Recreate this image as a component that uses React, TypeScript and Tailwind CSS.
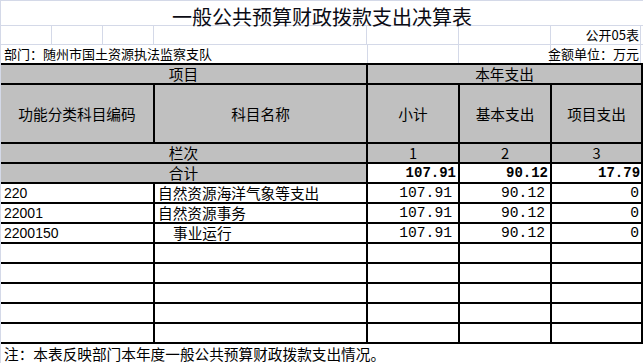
import React from 'react';

const cjk = "font-['Noto_Sans_CJK_SC','Noto_Sans',sans-serif]";
const mono = "font-['Liberation_Mono','DejaVu_Sans_Mono',monospace]";
const sans = "font-['Liberation_Sans',Arial,sans-serif]";

interface Row {
  code: string;
  name: string;
  total: string;
  basic: string;
  project: string;
  indent?: boolean;
}

const rows: Row[] = [
  { code: '220', name: '自然资源海洋气象等支出', total: '107.91', basic: '90.12', project: '0' },
  { code: '22001', name: '自然资源事务', total: '107.91', basic: '90.12', project: '0' },
  { code: '2200150', name: '事业运行', total: '107.91', basic: '90.12', project: '0', indent: true },
];

const emptyRows = 5;

const cell = 'border-2 border-black p-0 h-[20px] leading-[16px] text-[14.67px] text-black';
const head = `${cell} bg-[#c0c0c0] text-center font-normal ${cjk}`;

export default function App() {
  return (
    <div className="w-[643px] h-[363px] bg-white overflow-hidden border-l border-[#d4d9e8]">
      {/* sheet rows above the table */}
      <div className="h-[63px] flex flex-col">
        <div className="h-[26px] border-t border-b border-[#d4d9e8] relative">
          <div className={`absolute left-0 right-0 top-[1px] text-center text-[20px] leading-[29px] text-[#0b0b14] ${cjk}`}>
            一般公共预算财政拨款支出决算表
          </div>
        </div>
        <div className="h-[19px] flex border-b border-[#d4d9e8]">
          <div className="w-[51px] border-r border-[#d4d9e8]" />
          <div className="w-[51px] border-r border-[#d4d9e8]" />
          <div className="w-[51px] border-r border-[#d4d9e8]" />
          <div className="w-[213px] border-r border-[#d4d9e8]" />
          <div className="w-[92px] border-r border-[#d4d9e8]" />
          <div className="w-[92px] border-r border-[#d4d9e8]" />
          <div className={`w-[90px] border-r border-[#d4d9e8] flex items-center justify-end pr-[1px] text-[13px] text-black ${cjk}`}>
            公开05表
          </div>
        </div>
        <div className="h-[18px] flex">
          <div className={`w-[366px] flex items-center pl-[3px] text-[13px] text-black whitespace-nowrap ${cjk}`}>
            部门：随州市国土资源执法监察支队
          </div>
          <div className="w-[92px] border-l border-r border-[#d4d9e8]" />
          <div className="w-[92px] border-r border-[#d4d9e8]" />
          <div className={`w-[90px] border-r border-[#d4d9e8] flex items-center justify-end pr-[1px] text-[13px] text-black whitespace-nowrap ${cjk}`}>
            金额单位：万元
          </div>
        </div>
      </div>

      <table className="border-collapse table-fixed w-[641px] border-l-0">
        <colgroup>
          <col className="w-[153px]" />
          <col className="w-[213px]" />
          <col className="w-[92px]" />
          <col className="w-[92px]" />
          <col className="w-[91px]" />
        </colgroup>
        <thead>
          <tr>
            <th colSpan={2} className={`${head} border-l-0`}>项目</th>
            <th colSpan={3} className={head}>本年支出</th>
          </tr>
          <tr className="h-[59px]">
            <th className={`${head} h-[59px] border-l-0`}>功能分类科目编码</th>
            <th className={`${head} h-[59px]`}>科目名称</th>
            <th className={`${head} h-[59px]`}>小计</th>
            <th className={`${head} h-[59px]`}>基本支出</th>
            <th className={`${head} h-[59px]`}>项目支出</th>
          </tr>
          <tr>
            <th colSpan={2} className={`${head} border-l-0`}>栏次</th>
            <th className={`${head} ${mono} text-[12px]`}>1</th>
            <th className={`${head} ${mono} text-[12px]`}>2</th>
            <th className={`${head} ${mono} text-[12px]`}>3</th>
          </tr>
        </thead>
        <tbody>
          <tr>
            <td colSpan={2} className={`${head} border-l-0`}>合计</td>
            <td className={`${cell} ${mono} text-[14px] font-bold text-right pr-[2px]`}>107.91</td>
            <td className={`${cell} ${mono} text-[14px] font-bold text-right pr-[2px]`}>90.12</td>
            <td className={`${cell} ${mono} text-[14px] font-bold text-right pr-[1px]`}>17.79</td>
          </tr>
          {rows.map((r) => (
            <tr key={r.code}>
              <td className={`${cell} border-l-0 pl-[3px] ${sans} text-[14px]`}>{r.code}</td>
              <td className={`${cell} ${cjk} whitespace-nowrap ${r.indent ? 'pl-[18px]' : 'pl-[3px]'}`}>{r.name}</td>
              <td className={`${cell} ${mono} text-[12px] text-right pr-[6px]`}>{r.total}</td>
              <td className={`${cell} ${mono} text-[12px] text-right pr-[5px]`}>{r.basic}</td>
              <td className={`${cell} ${mono} text-[12px] text-right pr-[2px]`}>{r.project}</td>
            </tr>
          ))}
          {Array.from({ length: emptyRows }).map((_, i) => (
            <tr key={`empty-${i}`}>
              <td className={`${cell} border-l-0`} />
              <td className={cell} />
              <td className={cell} />
              <td className={cell} />
              <td className={cell} />
            </tr>
          ))}
        </tbody>
      </table>

      <div className={`h-[20px] flex items-center pl-[3px] text-[14.67px] text-black whitespace-nowrap ${cjk}`}>
        注：本表反映部门本年度一般公共预算财政拨款支出情况。
      </div>
    </div>
  );
}
